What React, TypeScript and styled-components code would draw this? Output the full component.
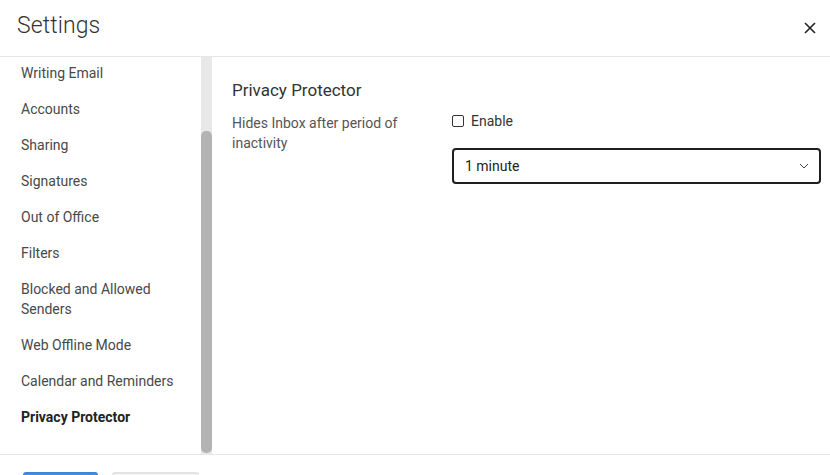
import React from "react";
import styled, { createGlobalStyle } from "styled-components";

const GlobalStyle = createGlobalStyle`
  html, body {
    margin: 0;
    padding: 0;
    height: 100%;
    overflow: hidden;
    background: #fff;
  }
  body {
    font-family: Roboto, "Liberation Sans", Arial, sans-serif;
    color: #333;
  }
  #root {
    height: 100%;
  }
`;

const Dialog = styled.div`
  display: flex;
  flex-direction: column;
  height: 100vh;
  overflow: hidden;
`;

const Header = styled.header`
  display: flex;
  align-items: center;
  justify-content: space-between;
  height: 51px;
  padding: 0 13px 5px 17px;
  border-bottom: 1px solid #e6e6e6;
  flex-shrink: 0;
`;

const Title = styled.h1`
  margin: 0;
  font-size: 23px;
  font-weight: 300;
  color: #333;
  letter-spacing: 0.1px;
`;

const CloseButton = styled.button`
  display: grid;
  place-content: center;
  width: 14px;
  height: 14px;
  padding: 0;
  margin-top: 5px;
  border: none;
  background: none;
  cursor: pointer;
`;

const Body = styled.div`
  display: flex;
  height: 398px;
  border-bottom: 1px solid #e6e6e6;
  flex-shrink: 0;
  box-sizing: border-box;
`;

const Sidebar = styled.nav`
  display: flex;
  width: 212px;
  flex-shrink: 0;
`;

const NavList = styled.ul`
  list-style: none;
  margin: -2px 0 0;
  padding: 0;
  width: 201px;
  overflow: hidden;
`;

const NavItem = styled.li<{ $active?: boolean }>`
  padding: 8px 10px 8px 21px;
  font-size: 14px;
  line-height: 20px;
  color: ${(p) => (p.$active ? "#222" : "#484848")};
  font-weight: ${(p) => (p.$active ? 700 : 400)};
  cursor: pointer;
`;

const ScrollTrack = styled.div`
  width: 11px;
  background: #e8e8e8;
  display: flex;
  flex-direction: column;
  padding-top: 74px;
  box-sizing: border-box;
`;

const ScrollThumb = styled.div`
  flex: 1;
  margin-bottom: 1px;
  background: #b3b3b3;
  border-radius: 5px;
`;

const Content = styled.main`
  flex: 1;
  padding: 22px 9px 0 20px;
`;

const SectionTitle = styled.h2`
  margin: 0 0 12px;
  font-size: 17px;
  line-height: 22px;
  font-weight: 400;
  color: #333;
`;

const SettingRow = styled.div`
  display: grid;
  grid-template-columns: 220px 1fr;
`;

const Description = styled.p`
  margin: 0;
  font-size: 14px;
  line-height: 20px;
  color: #555;
  padding-right: 20px;
`;

const Controls = styled.div`
  display: flex;
  flex-direction: column;
  gap: 17px;
  margin-top: -2px;
`;

const CheckLabel = styled.label`
  display: flex;
  align-items: center;
  gap: 7px;
  font-size: 14px;
  line-height: 20px;
  color: #333;
  cursor: pointer;
`;

const Box = styled.span`
  width: 10px;
  height: 10px;
  border: 1px solid #333;
  border-radius: 2px;
`;

const SelectBox = styled.div`
  display: flex;
  align-items: center;
  justify-content: space-between;
  height: 36px;
  box-sizing: border-box;
  padding: 0 10px 0 11px;
  border: 2px solid #1f1f1f;
  border-radius: 4px;
  font-size: 14px;
  color: #222;
  cursor: pointer;
`;

const Footer = styled.footer`
  display: flex;
  gap: 14px;
  padding: 17px 23px 0;
  flex: 1;
  min-height: 0;
  overflow: hidden;
`;

const FooterButton = styled.button<{ $primary?: boolean }>`
  flex-shrink: 0;
  width: ${(p) => (p.$primary ? "75px" : "87px")};
  height: 32px;
  border-radius: 3px;
  border: 1px solid ${(p) => (p.$primary ? "#3d87d8" : "#e3e3e3")};
  background: ${(p) => (p.$primary ? "#4a90e2" : "#f7f7f7")};
  border-top-width: 2px;
`;

const items = [
  "Writing Email",
  "Accounts",
  "Sharing",
  "Signatures",
  "Out of Office",
  "Filters",
  "Blocked and Allowed Senders",
  "Web Offline Mode",
  "Calendar and Reminders",
  "Privacy Protector",
];

export default function App() {
  return (
    <>
      <GlobalStyle />
      <Dialog>
        <Header>
          <Title>Settings</Title>
          <CloseButton aria-label="Close">
            <svg width="12" height="12" viewBox="0 0 12 12">
              <path d="M1 1L11 11M11 1L1 11" stroke="#222" strokeWidth="1.6" />
            </svg>
          </CloseButton>
        </Header>
        <Body>
          <Sidebar>
            <NavList>
              {items.map((item) => (
                <NavItem key={item} $active={item === "Privacy Protector"}>
                  {item === "Blocked and Allowed Senders" ? (
                    <>
                      Blocked and Allowed
                      <br />
                      Senders
                    </>
                  ) : (
                    item
                  )}
                </NavItem>
              ))}
            </NavList>
            <ScrollTrack>
              <ScrollThumb />
            </ScrollTrack>
          </Sidebar>
          <Content>
            <SectionTitle>Privacy Protector</SectionTitle>
            <SettingRow>
              <Description>Hides Inbox after period of inactivity</Description>
              <Controls>
                <CheckLabel>
                  <Box />
                  Enable
                </CheckLabel>
                <SelectBox>
                  <span>1 minute</span>
                  <svg width="10" height="6" viewBox="0 0 10 6">
                    <path d="M1 1L5 5L9 1" fill="none" stroke="#444" strokeWidth="1" />
                  </svg>
                </SelectBox>
              </Controls>
            </SettingRow>
          </Content>
        </Body>
        <Footer>
          <FooterButton $primary />
          <FooterButton />
        </Footer>
      </Dialog>
    </>
  );
}
